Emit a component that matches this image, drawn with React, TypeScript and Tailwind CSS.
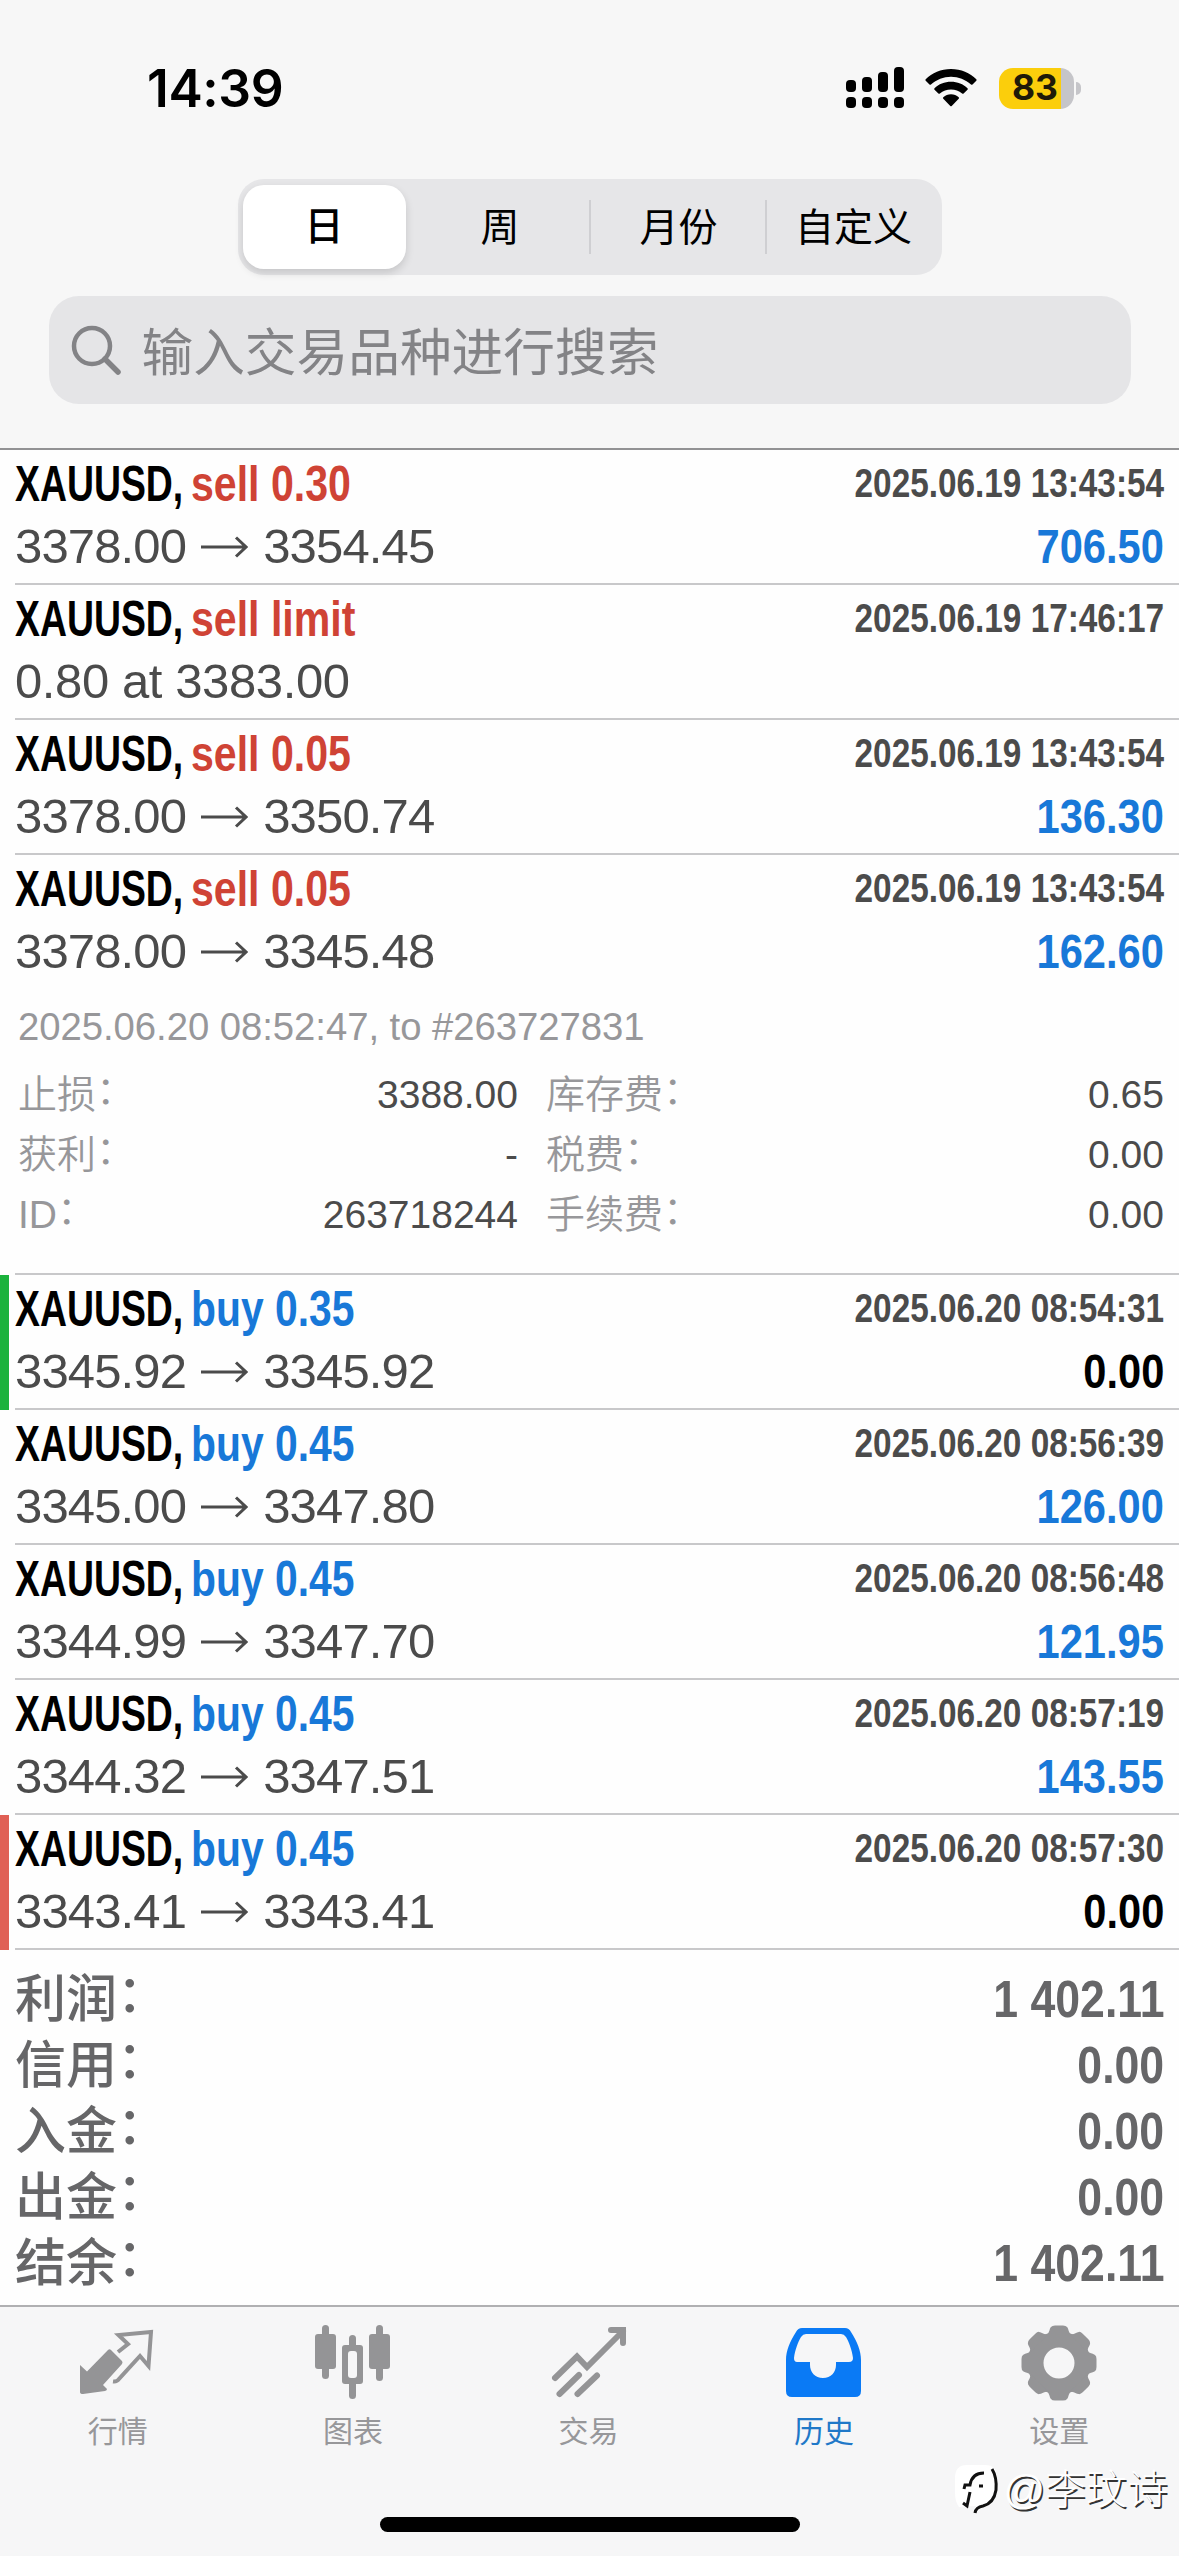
import React from "react";

type Trade = {
  action: string;
  side: "sell" | "buy";
  time: string;
  from?: string;
  to?: string;
  note?: string;
  profit?: string;
  zero?: boolean;
  mark?: "green" | "red";
  details?: boolean;
};

const trades: Trade[] = [
  { action: "sell 0.30", side: "sell", time: "2025.06.19 13:43:54", from: "3378.00", to: "3354.45", profit: "706.50" },
  { action: "sell limit", side: "sell", time: "2025.06.19 17:46:17", note: "0.80 at 3383.00" },
  { action: "sell 0.05", side: "sell", time: "2025.06.19 13:43:54", from: "3378.00", to: "3350.74", profit: "136.30" },
  { action: "sell 0.05", side: "sell", time: "2025.06.19 13:43:54", from: "3378.00", to: "3345.48", profit: "162.60", details: true },
  { action: "buy 0.35", side: "buy", time: "2025.06.20 08:54:31", from: "3345.92", to: "3345.92", profit: "0.00", zero: true, mark: "green" },
  { action: "buy 0.45", side: "buy", time: "2025.06.20 08:56:39", from: "3345.00", to: "3347.80", profit: "126.00" },
  { action: "buy 0.45", side: "buy", time: "2025.06.20 08:56:48", from: "3344.99", to: "3347.70", profit: "121.95" },
  { action: "buy 0.45", side: "buy", time: "2025.06.20 08:57:19", from: "3344.32", to: "3347.51", profit: "143.55" },
  { action: "buy 0.45", side: "buy", time: "2025.06.20 08:57:30", from: "3343.41", to: "3343.41", profit: "0.00", zero: true, mark: "red" },
];

const details = [
  ["止损", "3388.00", "库存费", "0.65"],
  ["获利", "-", "税费", "0.00"],
  ["ID", "263718244", "手续费", "0.00"],
];

const totals = [
  ["利润", "1 402.11"],
  ["信用", "0.00"],
  ["入金", "0.00"],
  ["出金", "0.00"],
  ["结余", "1 402.11"],
];

function StatusBar() {
  return (
    <div className="flex h-[179px] items-start justify-between pl-[147px] pr-[98px] pt-[67px]">
      <div className="flex h-[44px] items-center font-['Inter'] text-[51.5px] leading-none font-semibold tracking-[-0.4px]">14:39</div>
      <div className="flex h-[42px] items-center">
        <svg width="60" height="42" viewBox="0 0 60 42">
          <rect x="1" y="13" width="10" height="12" rx="4" />
          <rect x="17" y="10" width="10" height="15" rx="4" />
          <rect x="33" y="5" width="10" height="20" rx="4" />
          <rect x="49" y="0" width="10" height="25" rx="4" />
          <rect x="1" y="30" width="10" height="11" rx="4" />
          <rect x="17" y="30" width="10" height="11" rx="4" />
          <rect x="33" y="30" width="10" height="11" rx="4" />
          <rect x="49" y="30" width="10" height="11" rx="4" />
        </svg>
        <svg className="ml-[20px]" width="52" height="38" viewBox="0 0 52 38">
          <path d="M26 0C36 0 45 4 51.3 10.2Q52 11 51.3 11.7L47.5 15.5Q46.8 16.2 46 15.5C40.5 10.5 33.5 7.7 26 7.7S11.5 10.5 6 15.5Q5.2 16.2 4.5 15.5L.7 11.7Q0 11 .7 10.2C7 4 16 0 26 0Z" />
          <path d="M26 12.8C32.5 12.8 38.2 15.2 42.5 19.2Q43.2 20 42.5 20.7L38.6 24.5Q37.9 25.2 37.1 24.5C34 21.9 30.2 20.4 26 20.4S18 21.9 14.9 24.5Q14.1 25.2 13.4 24.5L9.5 20.7Q8.8 20 9.5 19.2C13.8 15.2 19.5 12.8 26 12.8Z" />
          <path d="M26 25.3C29 25.3 31.6 26.4 33.7 28.2Q34.5 29 33.7 29.8L26.7 36.9Q26 37.6 25.3 36.9L18.3 29.8Q17.5 29 18.3 28.2C20.4 26.4 23 25.3 26 25.3Z" />
        </svg>
        <div className="ml-[22px] flex h-[41px] w-[75px] items-center justify-center overflow-hidden rounded-[14px] bg-[linear-gradient(90deg,#fbce0c_83%,#c5c5c9_83%)] pr-[3px] font-['Inter'] text-[35.5px] leading-none font-bold text-[#1f1a08]">83</div>
        <div className="ml-[2px] h-[13px] w-[5px] rounded-r-full bg-[#c5c5c9]" />
      </div>
    </div>
  );
}

function Header() {
  return (
    <header className="h-[450px] shrink-0 border-b-2 border-[#929294] bg-[#f7f7f7]">
      <StatusBar />
      <div className="mx-auto flex h-[96px] w-[704px] items-center rounded-[26px] bg-[#e6e6e8] px-[5px] pb-[1px] text-[39px]">
        <div className="flex h-[84px] w-[163px] items-center justify-center rounded-[21px] bg-white font-medium shadow-[0_4px_8px_rgba(0,0,0,0.14)]">
          <span className="mt-[2px]">日</span>
        </div>
        <div className="mt-[4px] flex w-[183px] items-center justify-center pl-[6px]">周</div>
        <div className="h-[54px] w-[2px] bg-[#cfcfd2]" />
        <div className="mt-[4px] flex w-[174px] items-center justify-center pl-[2px]">月份</div>
        <div className="h-[54px] w-[2px] bg-[#cfcfd2]" />
        <div className="mt-[4px] flex flex-1 items-center justify-center pl-[4px]">自定义</div>
      </div>
      <div className="mx-auto mt-[21px] flex h-[108px] w-[1082px] items-center rounded-[30px] bg-[#e5e5e7] pl-[22px] text-[51.7px] text-[#838386]">
        <svg className="mt-[-1px]" width="50" height="50" viewBox="0 0 50 50" fill="none" stroke="#838386" strokeWidth="4.500" strokeLinecap="round">
          <circle cx="21" cy="21" r="18" />
          <path d="M34 34L47 47" strokeWidth="5.500" />
        </svg>
        <span className="ml-[21px] mt-[7px] whitespace-nowrap leading-none">输入交易品种进行搜索</span>
      </div>
    </header>
  );
}

function Arrow() {
  return (
    <svg className="mx-[15px] mt-[1px]" width="47" height="26" viewBox="0 0 47 26" fill="none" stroke="#4b4b4b" strokeWidth="3">
      <path d="M0 13H45M35 3.500L45 13L35 22.500" />
    </svg>
  );
}

/* Label followed by a full-width colon raised to the middle of the line. */
function Label({ text }: { text: string }) {
  return (
    <>
      {text}
      <span className="relative -top-[0.09em]">：</span>
    </>
  );
}

function Details() {
  return (
    <div className="pl-[3px] pt-[18px] text-[38.3px] text-[#97979a]">
      <div className="flex h-[57px] items-center whitespace-nowrap tracking-[-0.05px]">2025.06.20 08:52:47, to #263727831</div>
      <div className="pt-[9px]">
        {details.map(([a, b, c, d]) => (
          <div key={a} className="flex h-[60px] items-center whitespace-nowrap text-[39px] leading-none">
            <span className="w-[200px] font-[350]"><Label text={a} /></span>
            <span className="w-[300px] text-right text-[#4b4b4b]">{b}</span>
            <span className="ml-[28px] w-[200px] font-[350]"><Label text={c} /></span>
            <span className="flex-1 text-right text-[#4b4b4b]">{d}</span>
          </div>
        ))}
      </div>
    </div>
  );
}

function Row({ t }: { t: Trade }) {
  return (
    <div className={t.details ? "flex h-[420px] shrink-0" : "flex h-[135px] shrink-0"}>
      <div className={t.mark === "green" ? "w-[9px] bg-[#1bb23c]" : t.mark === "red" ? "w-[9px] bg-[#e06055]" : "w-[9px]"} />
      <div className="ml-[6px] flex-1 border-b-2 border-[#c8c8ca] pr-[15px]">
        <div className="flex h-[68px] items-center justify-between whitespace-nowrap text-[49.5px] leading-none font-bold">
          <div className="flex">
            <div className="w-[176px]">
              <span className="inline-block origin-left scale-x-[0.755] text-black">XAUUSD,</span>
            </div>
            <span className={t.side === "sell" ? "inline-block origin-left scale-x-[0.83] text-[#cf4335]" : "inline-block origin-left scale-x-[0.825] text-[#1878d8]"}>{t.action}</span>
          </div>
          <span className="mt-[-2px] inline-block origin-right scale-x-[0.823] text-[40.5px] text-[#4b4b4b]">{t.time}</span>
        </div>
        <div className="mt-[-1px] flex h-[58px] items-center justify-between whitespace-nowrap text-[49px] leading-none text-[#4b4b4b]">
          <div className={t.note ? "flex items-center tracking-[-0.4px]" : "flex items-center tracking-[-0.85px]"}>
            {t.note ?? (
              <>
                <span>{t.from}</span>
                <Arrow />
                <span>{t.to}</span>
              </>
            )}
          </div>
          <span className={t.zero ? "inline-block origin-right scale-x-[0.85] font-bold text-black" : "inline-block origin-right scale-x-[0.85] font-bold text-[#1878d8]"}>{t.profit}</span>
        </div>
        {t.details && <Details />}
      </div>
    </div>
  );
}

function MarketIcon() {
  return (
    <svg width="76" height="76" viewBox="0 0 76 76" fill="#949496">
      <path d="M0 40L7 46.500L28 25Q29.500 23.500 31 25L42 36Q43 37.500 42 39L23 60L27 64Q27 65.500 25 66L3 69Q0 69 0 67Z" />
      <path d="M38 27L48 19L38.500 10L71 7L68.500 41L60 31L39 54Q37 57 33 56.500" fill="none" stroke="#949496" strokeWidth="4" />
    </svg>
  );
}

function ChartIcon() {
  return (
    <svg width="76" height="76" viewBox="0 0 76 76" fill="#949496">
      <rect x="7" y="0" width="7" height="54" rx="3.500" />
      <rect x="0" y="9" width="21" height="35" rx="3" />
      <rect x="61" y="0" width="7" height="56" rx="3.500" />
      <rect x="54" y="9" width="21" height="35" rx="3" />
      <rect x="34" y="10" width="7" height="64" rx="3.500" />
      <rect x="27" y="20" width="21" height="39" rx="3" />
      <rect x="33" y="26" width="9" height="27" rx="3" fill="#f6f6f7" />
    </svg>
  );
}

function TradeIcon() {
  return (
    <svg width="76" height="76" viewBox="0 0 76 76" fill="none" stroke="#949496" strokeWidth="6" strokeLinecap="round">
      <path d="M4 53L26 31.500L36 42L72 6M60 5H72V18" />
      <path d="M8.500 69L28 50M26.500 69L46 50.500" />
    </svg>
  );
}

function HistoryIcon() {
  return (
    <svg width="76" height="76" viewBox="0 0 76 76">
      <path fill="#0a7af5" fillRule="evenodd" d="M16 3H59Q63 3 65 7C71 16 75 26 75 35V66Q75 72 69 72H6Q0 72 0 66V35C0 26 4 16 10 7Q12 3 16 3ZM20 9Q17 9 15 12C12 17 9 25 8 33Q8 37 11 37H24V40C24 47 29 53 37 53S50 47 50 40V37H63Q67 37 67 33C66 25 63 17 60 12Q58 9 55 9Z" />
    </svg>
  );
}

function GearIcon() {
  const teeth = [0, 45, 90, 135, 180, 225, 270, 315];
  return (
    <svg width="76" height="76" viewBox="0 0 76 76">
      <circle cx="38" cy="38" r="23.500" fill="none" stroke="#949496" strokeWidth="16" />
      {teeth.map((a) => (
        <path key={a} d="M25 10C29 8 28 4 30 2Q31 0.500 34 0.500H42Q45 0.500 46 2C48 4 47 8 51 10Z" fill="#949496" transform={`rotate(${a} 38 38)`} />
      ))}
    </svg>
  );
}

const tabs = [
  { label: "行情", icon: <MarketIcon /> },
  { label: "图表", icon: <ChartIcon /> },
  { label: "交易", icon: <TradeIcon /> },
  { label: "历史", icon: <HistoryIcon />, active: true },
  { label: "设置", icon: <GearIcon /> },
];

function Watermark() {
  return (
    <div className="absolute right-[11px] bottom-[40px] flex items-center gap-[4px]">
      <svg width="44" height="52" viewBox="0 0 44 52" fill="none">
        <path d="M12 1H30Q42 1 42 14V28Q40 40 28 43L20 50L21 42L4 43Q0 38 0 28V14Q0 1 12 1Z" fill="#fff" />
        <path d="M9 25L10 21H15Q17 9 29 9M24 22H28" stroke="#111" strokeWidth="3" />
        <path d="M15 28L12 42L8 39" stroke="#111" strokeWidth="3" />
        <path d="M37 5Q42 13 41 26Q39 39 28 42Q21 43 20 49" stroke="#111" strokeWidth="3" />
      </svg>
      <span className="text-[41px] leading-none font-light whitespace-nowrap text-white [text-shadow:1.5px_1.5px_0.5px_#333]">@李玟诗</span>
    </div>
  );
}

export default function App() {
  return (
    <div className="relative flex h-[2556px] w-[1179px] flex-col overflow-hidden bg-[#fefefe] font-['Liberation_Sans','Noto_Sans_CJK_SC',sans-serif] text-black">
      <Header />
      <main className="flex flex-1 flex-col">
        {trades.map((t, i) => (
          <Row key={i} t={t} />
        ))}
        <div className="pl-[15px] pr-[15px] pt-[16px]">
          {totals.map(([label, value]) => (
            <div key={label} className="flex h-[66px] items-center justify-between text-[51px] leading-none text-[#666668]">
              <span className="font-medium"><Label text={label} /></span>
              <span className="inline-block origin-right scale-x-[0.85] text-[52.5px] font-bold">{value}</span>
            </div>
          ))}
        </div>
      </main>
      <nav className="flex h-[251px] shrink-0 flex-col items-center border-t-2 border-[#b0b0b2] bg-[#f6f6f7]">
        <div className="flex w-full pr-[2px]">
          {tabs.map((tab) => (
            <div key={tab.label} className={tab.active ? "flex flex-1 flex-col items-center pt-[18px] text-[#1f78c8]" : "flex flex-1 flex-col items-center pt-[18px] text-[#97979a]"}>
              {tab.icon}
              <span className="mt-[15px] text-[30px] leading-[32px]">{tab.label}</span>
            </div>
          ))}
        </div>
        <div className="mt-[69px] h-[15px] w-[420px] rounded-full bg-black" />
      </nav>
      <Watermark />
    </div>
  );
}
